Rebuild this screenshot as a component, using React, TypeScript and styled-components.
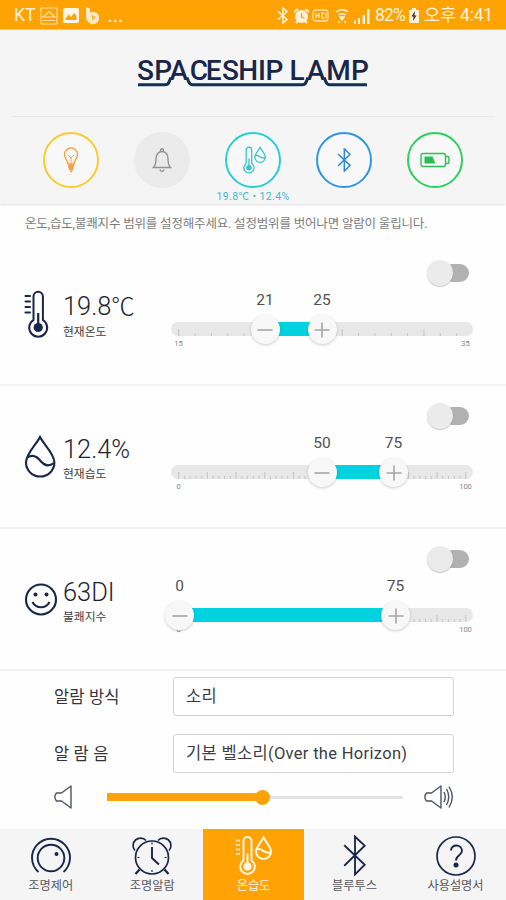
import React from "react";
import styled, { createGlobalStyle } from "styled-components";

const NAVY = "#17264a";
const ORANGE = "#ffa305";
const CYAN = "#00d2e0";

const GlobalStyle = createGlobalStyle`
  * { box-sizing: border-box; }
  body {
    margin: 0;
    background: #fff;
    font-family: Roboto, "Noto Sans CJK KR", sans-serif;
  }
`;

const Screen = styled.div`
  width: 506px;
  height: 900px;
  display: flex;
  flex-direction: column;
  background: #fefefe;
  overflow: hidden;
`;

/* ---------- status bar ---------- */
const StatusBar = styled.div`
  height: 30px;
  flex: none;
  display: flex;
  justify-content: space-between;
  padding: 0 13px 0 14px;
  background: ${ORANGE};
  color: #fff2dc;
  border-bottom: 1px solid #ffc565;
`;

const StatusGroup = styled.div`
  display: flex;
  align-items: center;
  height: 31px;
`;

const StatusText = styled.span<{ $size?: number; $left?: number; $spacing?: number }>`
  font-size: ${(p) => p.$size ?? 18}px;
  line-height: 31px;
  margin-left: ${(p) => p.$left ?? 0}px;
  letter-spacing: ${(p) => p.$spacing ?? 0}px;
  white-space: nowrap;
`;

const StatusIcon = styled.svg<{ $left: number }>`
  margin-left: ${(p) => p.$left}px;
  flex: none;
`;

/* ---------- header ---------- */
const Header = styled.header`
  height: 174px;
  flex: none;
  display: flex;
  flex-direction: column;
  align-items: center;
  background: #f5f5f5;
  box-shadow: 0 1px 2px rgba(0, 0, 0, 0.12);
`;

const LogoArea = styled.div`
  width: 482px;
  height: 87px;
  border-bottom: 1px solid #e9e9e9;
  display: flex;
  justify-content: center;
  padding-top: 24px;
`;

const StatusRow = styled.div`
  display: flex;
  width: 456px;
  padding-top: 15px;
`;

const StatusItem = styled.div`
  flex: 1;
  display: flex;
  flex-direction: column;
  align-items: center;
`;

const Ring = styled.div<{ $color?: string }>`
  width: 56px;
  height: 56px;
  border-radius: 50%;
  border: 2px solid ${(p) => p.$color ?? "#ebebeb"};
  background: ${(p) => (p.$color ? "#f8f8f8" : "#ebebeb")};
  display: flex;
  align-items: center;
  justify-content: center;
`;

const RingCaption = styled.span`
  margin-top: 2px;
  font-size: 10.5px;
  line-height: 13px;
  letter-spacing: 0.4px;
  color: #45b9c6;
  white-space: nowrap;
`;

const Notice = styled.p`
  margin: 0;
  height: 39px;
  flex: none;
  padding-left: 25px;
  font-size: 12.5px;
  line-height: 40px;
  letter-spacing: -0.17px;
  color: #7c7c7c;
  white-space: nowrap;
`;

/* ---------- sensor rows ---------- */
const SensorRow = styled.section<{ $height: number }>`
  height: ${(p) => p.$height}px;
  flex: none;
  display: grid;
  grid-template-columns: 39px 108px 302px;
  padding-left: 24px;
  border-bottom: 2px solid #f2f2f2;
`;

const SensorIcon = styled.div`
  display: flex;
  align-items: center;
  height: 141px;
`;

const Reading = styled.div`
  padding-top: 45px;
`;

const ReadingValue = styled.div`
  font-size: 25.4px;
  font-weight: 300;
  line-height: 36px;
  color: #20222e;
  white-space: nowrap;
`;

const ReadingUnit = styled.span<{ $tight?: boolean }>`
  font-size: ${(p) => (p.$tight ? 23.5 : 25.4)}px;
`;

const ReadingLabel = styled.div`
  font-size: 11.8px;
  line-height: 15px;
  color: #3c3c44;
`;

const RangeControl = styled.div`
  display: flex;
  flex-direction: column;
  padding-top: 17px;
`;

const Switch = styled.div`
  align-self: flex-end;
  width: 42px;
  height: 26px;
  display: flex;
  align-items: center;
  margin-right: 4px;
`;

const SwitchKnob = styled.div`
  width: 26px;
  height: 26px;
  border-radius: 50%;
  background: #ebebeb;
  box-shadow: 0 1px 1px rgba(0, 0, 0, 0.2);
  z-index: 1;
`;

const SwitchTrack = styled.div`
  width: 26px;
  height: 18px;
  margin-left: -10px;
  border-radius: 9px;
  background: #b1b1b1;
`;

const Slider = styled.div`
  position: relative;
  margin-top: 36px;
  height: 14px;
  border-radius: 7px;
  background: #e8e8e8;
`;

const Scale = styled.svg`
  display: block;
`;

const Fill = styled.div<{ $from: number; $to: number }>`
  position: absolute;
  top: 0;
  height: 14px;
  left: ${(p) => p.$from}px;
  width: ${(p) => p.$to - p.$from}px;
  background: ${CYAN};
`;

const Thumb = styled.div<{ $at: number }>`
  position: absolute;
  left: ${(p) => p.$at - 14.5}px;
  top: -7px;
  width: 29px;
  height: 29px;
  border-radius: 50%;
  background: #f8f8f8;
  box-shadow: 0 1px 3px rgba(0, 0, 0, 0.2);
  display: flex;
  align-items: center;
  justify-content: center;
`;

const ThumbValue = styled.span<{ $at: number }>`
  position: absolute;
  left: ${(p) => p.$at - 20}px;
  top: -32px;
  width: 40px;
  text-align: center;
  font-size: 15.5px;
  line-height: 20px;
  color: #505050;
`;

const ScaleEnds = styled.div`
  display: flex;
  justify-content: space-between;
  padding-top: 3px;
`;

const ScaleEnd = styled.span`
  width: 15px;
  text-align: center;
  font-size: 7.5px;
  line-height: 9px;
  color: #858585;
`;

/* ---------- alarm settings ---------- */
const Settings = styled.section`
  flex: 1;
  padding-top: 6px;
  padding-left: 54px;
`;

const Field = styled.label`
  display: flex;
  align-items: center;
  height: 39px;
  margin-bottom: 18px;
`;

const FieldName = styled.span`
  width: 119px;
  font-size: 16.5px;
  line-height: 37px;
  padding-top: 2px;
  letter-spacing: 0.15px;
  color: #33343e;
  white-space: pre;
`;

const FieldBox = styled.div`
  width: 281px;
  height: 39px;
  padding-left: 12px;
  border: 1.5px solid #d3d3d3;
  border-radius: 3px;
  background: #fff;
  font-size: 16.5px;
  line-height: 38px;
  letter-spacing: 0.32px;
  color: #3b3c46;
  white-space: nowrap;
`;

const VolumeRow = styled.div`
  display: flex;
  align-items: center;
  height: 26px;
  margin-top: -7px;
`;

const VolumeBar = styled.div`
  display: flex;
  align-items: center;
  width: 296px;
  margin: 0 21px 0 34px;
`;

const VolumeFill = styled.div`
  width: 149px;
  height: 8px;
  background: ${ORANGE};
`;

const VolumeThumb = styled.div`
  width: 15px;
  height: 15px;
  margin-left: -1px;
  border-radius: 50%;
  background: ${ORANGE};
`;

const VolumeRest = styled.div`
  flex: 1;
  height: 3px;
  background: #e4e4e4;
`;

/* ---------- bottom navigation ---------- */
const Nav = styled.nav`
  height: 71px;
  flex: none;
  display: grid;
  grid-template-columns: 203px 101px 202px;
  background: #f5f5f6;
`;

const TabGroup = styled.div`
  display: flex;
`;

const Tab = styled.div<{ $active?: boolean }>`
  flex: 1;
  display: flex;
  flex-direction: column;
  align-items: center;
  padding-top: 6px;
  background: ${(p) => (p.$active ? ORANGE : "transparent")};
  color: ${(p) => (p.$active ? "#fff6e6" : NAVY)};
`;

const TabIcon = styled.span`
  height: 44px;
  display: flex;
  align-items: flex-start;
`;

const TabLabel = styled.span<{ $active?: boolean }>`
  font-size: 12.2px;
  line-height: 15px;
  color: ${(p) => (p.$active ? "#fff6e6" : "#56565c")};
`;

/* ---------- drawings ---------- */
const Logo = () => (
  <svg width="234" height="40" viewBox="137 54 234 40">
    <text
      y="79.5"
      x="138 155.2 170.6 190.8 206.8 223 239.2 259 266.5 284 290.6 307.8 327.2 352"
      fontFamily="Roboto, sans-serif"
      fontWeight="500"
      fontSize="28"
      fill={NAVY}
    >
      SPACESHIP LAMP
    </text>
    <g fill="none" stroke="#16304e" strokeWidth="3">
      <path d="M139 84.8H166C168.800 84.800 169.700 83.500 170.500 81L171.800 77.500" />
      <path d="M188 77.500L189.300 81C190.200 83.500 191 84.800 194 84.800H303C305.800 84.800 306.800 83.500 307.600 81L308.900 77.500" />
      <path d="M325.200 77.500L326.500 81C327.400 83.500 328.300 84.800 331 84.800H368" />
    </g>
  </svg>
);

const ThermoDrop = ({ w, h, sw, marks }: { w: number; h: number; sw: number; marks?: boolean }) => (
  <svg
    width={w}
    height={h}
    viewBox={marks ? "0 0 36 40" : "3 0 33 40"}
    fill="none"
    stroke="currentColor"
    strokeWidth={sw}
  >
    <path d="M7.500 25V5.500a4 4 0 0 1 8 0V25a7.300 7.300 0 1 1-8 0z" />
    <circle cx="11.500" cy="31" r="3" fill="currentColor" />
    <path d="M11.500 30V18" />
    {marks && <path d="M0 5h4M0 9.500h4M0 14h4M0 18.500h4" strokeDasharray="1.500 1" />}
    <path d="M27.500 2C25 7 20 11.500 20 16a7.500 7.500 0 0 0 15 0C35 11.500 30 7 27.500 2z" />
    <path d="M20.500 14c5-3 7 5 14 3" />
  </svg>
);

const Bluetooth = ({ w, h, sw }: { w: number; h: number; sw: number }) => (
  <svg width={w} height={h} viewBox="0 0 22 40" fill="none" stroke="currentColor" strokeWidth={sw}>
    <path d="M1 10L21 29L11.500 38.500V1.500L21 10.500L1 30" />
  </svg>
);

const Bulb = () => (
  <svg width="16" height="26" viewBox="0 0 16 26" fill="none" stroke="#f7a04b" strokeWidth="1.4">
    <path d="M5 17c0-4-3.500-5-3.500-9.500a6.500 6.500 0 0 1 13 0C14.500 12 11 13 11 17z" />
    <path d="M5 8l3 3 3-3M8 11v6" strokeWidth="1" />
    <path d="M5 18.500h6M5.300 20.500h5.400M6 22.500h4" strokeWidth="1.800" />
    <path d="M7 24.500h2" />
  </svg>
);

const Bell = () => (
  <svg width="20" height="26" viewBox="0 0 20 26" fill="none" stroke="#949494" strokeWidth="1.400">
    <path d="M1.500 20.500c2-2 2.500-5 2.500-9 0-4 2.500-7 6-7s6 3 6 7c0 4 .5 7 2.500 9z" />
    <path d="M8.500 4c0-3 3-3 3 0M8 22.500c.5 2.500 3.500 2.500 4 0" />
  </svg>
);

const Battery = () => (
  <svg width="30" height="16" viewBox="0 0 30 16" fill="none" stroke="#2abf55" strokeWidth="1.400">
    <rect x="1" y="1.500" width="24.500" height="13" rx="2" />
    <path d="M26 4.500h1.500q1.500 0 1.500 1.500v4q0 1.500-1.500 1.500H26" />
    <path d="M4.500 4.500h8l3 7h-11z" fill="#2abf55" stroke="none" />
  </svg>
);

const Thermometer = () => (
  <svg width="26" height="50" viewBox="0 0 26 50" fill="none" stroke={NAVY} strokeWidth="2">
    <path d="M9.500 31V7.500a4.700 4.700 0 0 1 9.400 0V31a9 9 0 1 1-9.400 0z" />
    <path d="M14.200 38V24" strokeWidth="2.200" />
    <circle cx="14.200" cy="38.500" r="4.600" fill={NAVY} stroke="none" />
    <path d="M1.500 7H6M1.500 12.500H6M1.500 18H6M1.500 23.500H6" strokeLinecap="round" />
  </svg>
);

const Drop = () => (
  <svg width="32" height="43" viewBox="0 0 32 43" fill="none" stroke={NAVY} strokeWidth="2.100">
    <path d="M16 2C12 10 2 18.500 2 27.500a14.200 14 0 0 0 28.400 0C30.400 18.500 20 10 16 2z" />
    <path d="M3.500 22.500c6-4 10.500 0 14 4.500 3.500 4 7.500 4.500 12.500 1" />
  </svg>
);

const Smile = () => (
  <svg width="34" height="34" viewBox="0 0 34 34" fill="none" stroke={NAVY} strokeWidth="2.100">
    <circle cx="17" cy="16.500" r="15" />
    <path d="M8.500 19c3.500 7 13.500 7 17 0" />
    <circle cx="11.500" cy="11.500" r="2" fill={NAVY} stroke="none" />
    <circle cx="22.500" cy="11.500" r="2" fill={NAVY} stroke="none" />
  </svg>
);

const ThumbSign = ({ plus }: { plus?: boolean }) => (
  <svg width="16" height="16" viewBox="0 0 16 16" stroke="#a6a6a6" strokeWidth="1.600">
    <path d={plus ? "M.5 8h15M8 .5v15" : "M.5 8h15"} />
  </svg>
);

const Speaker = ({ waves }: { waves?: boolean }) => (
  <svg
    width={waves ? 32 : 19}
    height="26"
    viewBox={waves ? "0 0 32 26" : "0 0 19 26"}
    fill="none"
    stroke="#50535f"
    strokeWidth="1.400"
  >
    <path d="M17 2L7.500 9H2.500Q.8 11 .8 13T2.500 17H7.500L17 24z" strokeLinejoin="round" />
    {waves && <path d="M20 8q2.500 5 0 10M22.500 5q4.500 8 0 16M25 2.500q6.500 10.500 0 21" />}
  </svg>
);

const Dial = () => (
  <svg width="42" height="42" viewBox="0 0 42 42" fill="none" stroke={NAVY} strokeWidth="1.900">
    <circle cx="21" cy="23" r="13.300" />
    <path d="M8.500 37A19 19 0 1 1 33.500 37" />
    <circle cx="26.500" cy="19" r="2" fill={NAVY} stroke="none" />
  </svg>
);

const AlarmClock = () => (
  <svg width="42" height="42" viewBox="0 0 42 42" fill="none" stroke={NAVY} strokeWidth="1.700">
    <circle cx="21" cy="22.500" r="16.500" />
    <path d="M4 15.500A7 7 0 1 1 15 5.500M27 5.500A7 7 0 1 1 38 15.500" />
    <path d="M21 12v11l7 6.500" strokeWidth="1.900" />
    <path d="M8.500 34.500L4.500 39M33.500 34.500L37.500 39" strokeWidth="2.200" />
    <path d="M21 7.500v2M21 35v2M6.500 22.500h2M33.500 22.500h2" strokeWidth="1.200" />
  </svg>
);

const Help = () => (
  <svg width="42" height="42" viewBox="0 0 42 42" fill="none" stroke={NAVY} strokeWidth="1.700">
    <circle cx="21" cy="21" r="19" />
    <path d="M16 15.500c0-7 11-6.500 11 .2 0 4.800-6 4.300-6 9.800" strokeWidth="1.900" />
    <circle cx="21" cy="30" r="2.500" fill={NAVY} stroke="none" />
  </svg>
);

type Tick = { x: number; tall: boolean };

const temperatureTicks: Tick[] = Array.from({ length: 18 }, (_, i) => ({
  x: 7.7 + i * 16.35,
  tall: i % 5 === 0,
}));

const percentTicks: Tick[] = Array.from({ length: 51 }, (_, i) => ({
  x: 7.7 + i * 5.74,
  tall: i % 5 === 0,
}));

type Sensor = {
  icon: React.ReactNode;
  value: string;
  unit: string;
  tightUnit?: boolean;
  label: string;
  height: number;
  ticks: Tick[];
  min: string;
  max: string;
  low: string;
  high: string;
  lowAt: number;
  highAt: number;
};

const sensors: Sensor[] = [
  {
    icon: <Thermometer />,
    value: "19.8",
    unit: "℃",
    tightUnit: true,
    label: "현재온도",
    height: 143,
    ticks: temperatureTicks,
    min: "15",
    max: "35",
    low: "21",
    high: "25",
    lowAt: 94,
    highAt: 151,
  },
  {
    icon: <Drop />,
    value: "12.4",
    unit: "%",
    label: "현재습도",
    height: 143,
    ticks: percentTicks,
    min: "0",
    max: "100",
    low: "50",
    high: "75",
    lowAt: 151,
    highAt: 222.5,
  },
  {
    icon: <Smile />,
    value: "63",
    unit: "DI",
    label: "불쾌지수",
    height: 142,
    ticks: percentTicks,
    min: "0",
    max: "100",
    low: "0",
    high: "75",
    lowAt: 8.5,
    highAt: 224.5,
  },
];

const CyanTint = styled.span`
  display: flex;
  padding-left: 3px;
  color: #2fc4d0;
`;

const BlueTint = styled.span`
  display: flex;
  color: #2b86d9;
`;

type TabProps = { label: string; active?: boolean; children: React.ReactNode };

const NavTab = ({ label, active, children }: TabProps) => (
  <Tab $active={active}>
    <TabIcon>{children}</TabIcon>
    <TabLabel $active={active}>{label}</TabLabel>
  </Tab>
);

export default function App() {
  return (
    <Screen>
      <GlobalStyle />
      <StatusBar>
        <StatusGroup>
          <StatusText $size={17.5}>KT</StatusText>
          <StatusIcon $left={5} width="18" height="18" viewBox="0 0 18 18" fill="none" stroke="#ffe0a8" strokeWidth="1.200">
            <rect x="1" y="1" width="16" height="16" rx="1" />
            <path d="M3 10l6-5.500 6 5.500zM3 13.500h12" />
          </StatusIcon>
          <StatusIcon $left={5} width="16" height="15" viewBox="0 0 16 15">
            <rect width="16" height="15" rx="2" fill="#fff6e6" />
            <path d="M2.500 10.500l3-4 2.500 2.500 3-4 2.500 3v4h-11z" fill={ORANGE} />
          </StatusIcon>
          <StatusIcon $left={6} width="16" height="19" viewBox="0 0 16 19" fill="#ffe9c4">
            <path d="M1 1l4 1.500v4A6.200 6.200 0 1 1 2.500 15L1 13z" />
            <path d="M7 9l4 2-4 4z" fill="#ffb93f" />
          </StatusIcon>
          <StatusText $size={20} $left={6}>...</StatusText>
        </StatusGroup>
        <StatusGroup>
          <StatusIcon $left={0} width="12" height="17" viewBox="0 0 12 17" fill="none" stroke="#fff2dc" strokeWidth="1.500">
            <path d="M1 4.500l9 8L6 16V1l4 3.500-9 8" />
          </StatusIcon>
          <StatusIcon $left={5} width="15" height="16" viewBox="0 0 15 16">
            <circle cx="7.500" cy="8.500" r="6.500" fill="#fff2dc" />
            <path d="M0 4l4-3M15 4l-4-3M2 15l2-2M13 15l-2-2" stroke="#fff2dc" strokeWidth="2" />
            <path d="M7.500 5v4l3 1" fill="none" stroke={ORANGE} strokeWidth="1.300" />
          </StatusIcon>
          <StatusIcon $left={3} width="17" height="13" viewBox="0 0 17 13" fill="none" stroke="#ffe0a8" strokeWidth="1.300">
            <rect x="1" y="1" width="15" height="11" rx="3" />
            <path d="M4 4v5M4 6.500h3M7 4v5M12.500 4h-2.500v5h2.500M14 4v5" />
          </StatusIcon>
          <StatusIcon $left={6} width="14" height="16" viewBox="0 0 14 16" fill="none" stroke="#fff2dc" strokeWidth="1.500">
            <path d="M1 4q6-4.500 12 0M3.500 7q3.500-2.500 7 0" />
            <path d="M5 9h4l-2 3z" fill="#fff2dc" />
            <path d="M4 15v-2M10 15v-2" />
          </StatusIcon>
          <StatusIcon $left={5} width="16" height="16" viewBox="0 0 16 16" fill="#fff2dc">
            <path d="M0 16v-3l2-1v4zM4 16v-6h2v6zM8.500 16V7h2.500v9zM13 16V1h2.500v15z" />
          </StatusIcon>
          <StatusText $left={5} $size={17.5} $spacing={-0.8}>82%</StatusText>
          <StatusIcon $left={4} width="10" height="15" viewBox="0 0 10 15">
            <path d="M3 0h4v2h3v13H0V2h3z" fill="#fff2dc" />
            <path d="M6 3L2.500 8.500h2L4 13l3.500-5.500h-2z" fill="#3f3520" />
          </StatusIcon>
          <StatusText $left={5} $size={17.5} $spacing={-0.2}>오후 4:41</StatusText>
        </StatusGroup>
      </StatusBar>

      <Header>
        <LogoArea>
          <Logo />
        </LogoArea>
        <StatusRow>
          <StatusItem>
            <Ring $color="#fbcb2f"><Bulb /></Ring>
          </StatusItem>
          <StatusItem>
            <Ring><Bell /></Ring>
          </StatusItem>
          <StatusItem>
            <Ring $color="#2bcbd6">
              <CyanTint><ThermoDrop w={23} h={28} sw={1.8} /></CyanTint>
            </Ring>
            <RingCaption>19.8℃ • 12.4%</RingCaption>
          </StatusItem>
          <StatusItem>
            <Ring $color="#2f96e4">
              <BlueTint><Bluetooth w={14} h={24} sw={2.4} /></BlueTint>
            </Ring>
          </StatusItem>
          <StatusItem>
            <Ring $color="#2fcf5f"><Battery /></Ring>
          </StatusItem>
        </StatusRow>
      </Header>

      <Notice>온도,습도,불쾌지수 범위를 설정해주세요. 설정범위를 벗어나면 알람이 울립니다.</Notice>

      {sensors.map((s) => (
        <SensorRow key={s.label} $height={s.height}>
          <SensorIcon>{s.icon}</SensorIcon>
          <Reading>
            <ReadingValue>
              {s.value}
              <ReadingUnit $tight={s.tightUnit}>{s.unit}</ReadingUnit>
            </ReadingValue>
            <ReadingLabel>{s.label}</ReadingLabel>
          </Reading>
          <RangeControl>
            <Switch>
              <SwitchKnob />
              <SwitchTrack />
            </Switch>
            <Slider>
              <Scale width="302" height="14" stroke="#c4c4c4" strokeWidth="1">
                {s.ticks.map((t) => (
                  <path key={t.x} d={`M${t.x} ${t.tall ? 7 : 11}V14`} />
                ))}
              </Scale>
              <Fill $from={s.lowAt} $to={s.highAt} />
              <Thumb $at={s.lowAt}><ThumbSign /></Thumb>
              <Thumb $at={s.highAt}><ThumbSign plus /></Thumb>
              <ThumbValue $at={s.lowAt}>{s.low}</ThumbValue>
              <ThumbValue $at={s.highAt}>{s.high}</ThumbValue>
            </Slider>
            <ScaleEnds>
              <ScaleEnd>{s.min}</ScaleEnd>
              <ScaleEnd>{s.max}</ScaleEnd>
            </ScaleEnds>
          </RangeControl>
        </SensorRow>
      ))}

      <Settings>
        <Field>
          <FieldName>알람 방식</FieldName>
          <FieldBox>소리</FieldBox>
        </Field>
        <Field>
          <FieldName>알 람 음</FieldName>
          <FieldBox>기본 벨소리(Over the Horizon)</FieldBox>
        </Field>
        <VolumeRow>
          <Speaker />
          <VolumeBar>
            <VolumeFill />
            <VolumeThumb />
            <VolumeRest />
          </VolumeBar>
          <Speaker waves />
        </VolumeRow>
      </Settings>

      <Nav>
        <TabGroup>
          <NavTab label="조명제어"><Dial /></NavTab>
          <NavTab label="조명알람"><AlarmClock /></NavTab>
        </TabGroup>
        <NavTab label="온습도" active><ThermoDrop w={36} h={41} sw={2} marks /></NavTab>
        <TabGroup>
          <NavTab label="블루투스"><Bluetooth w={23} h={41} sw={1.8} /></NavTab>
          <NavTab label="사용설명서"><Help /></NavTab>
        </TabGroup>
      </Nav>
    </Screen>
  );
}
